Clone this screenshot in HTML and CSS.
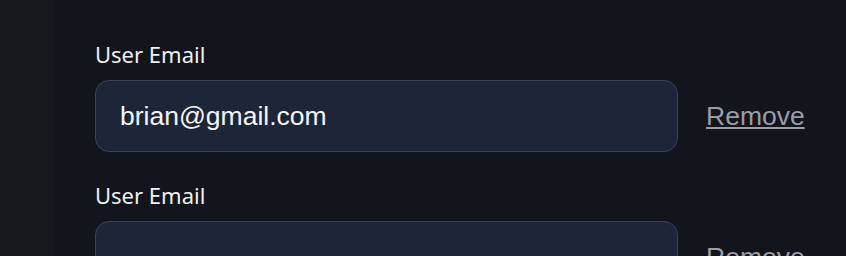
FILE: index.html
```
<!DOCTYPE html>
<html lang="en">
<head>
    <meta charset="UTF-8">
    <meta name="viewport" content="width=device-width, initial-scale=1.0">
    <title>User Emails</title>
    <link rel="stylesheet" href="styles.css">
</head>
<body>
    <div class="sidebar"></div>
    <div class="main">
        <div class="field">
            <label class="label">User Email</label>
            <div class="row">
                <input class="email" type="text" value="brian@gmail.com">
                <a class="remove" href="#">Remove</a>
            </div>
        </div>
        <div class="field">
            <label class="label">User Email</label>
            <div class="row">
                <input class="email" type="text" value="">
                <a class="remove" href="#">Remove</a>
            </div>
        </div>
    </div>
</body>
</html>
```

FILE: styles.css
```
body {
    margin: 0;
    display: flex;
    height: 100vh;
    overflow: hidden;
    background-color: #13151c;
}

.sidebar {
    width: 53px;
    flex-shrink: 0;
    background-color: #17181d;
}

.main {
    flex: 1;
    padding: 39px 0 0 42px;
}

.field {
    margin-bottom: 28px;
}

.label {
    display: block;
    font-family: 'Noto Sans', sans-serif;
    font-size: 22px;
    line-height: 30px;
    color: #eef0f2;
    margin-bottom: 11px;
}

.row {
    display: flex;
    align-items: center;
}

.email {
    box-sizing: border-box;
    width: 583px;
    height: 72px;
    padding: 0 24px;
    font-family: 'Liberation Sans', Arial, sans-serif;
    font-size: 26.5px;
    color: #f5f6f8;
    background-color: #1c2638;
    border: 1px solid #3a4559;
    border-radius: 14px;
    outline: none;
}

.remove {
    margin-left: 28px;
    font-family: 'Liberation Sans', Arial, sans-serif;
    font-size: 26.5px;
    color: #9b9da6;
    text-decoration: underline;
}
```
